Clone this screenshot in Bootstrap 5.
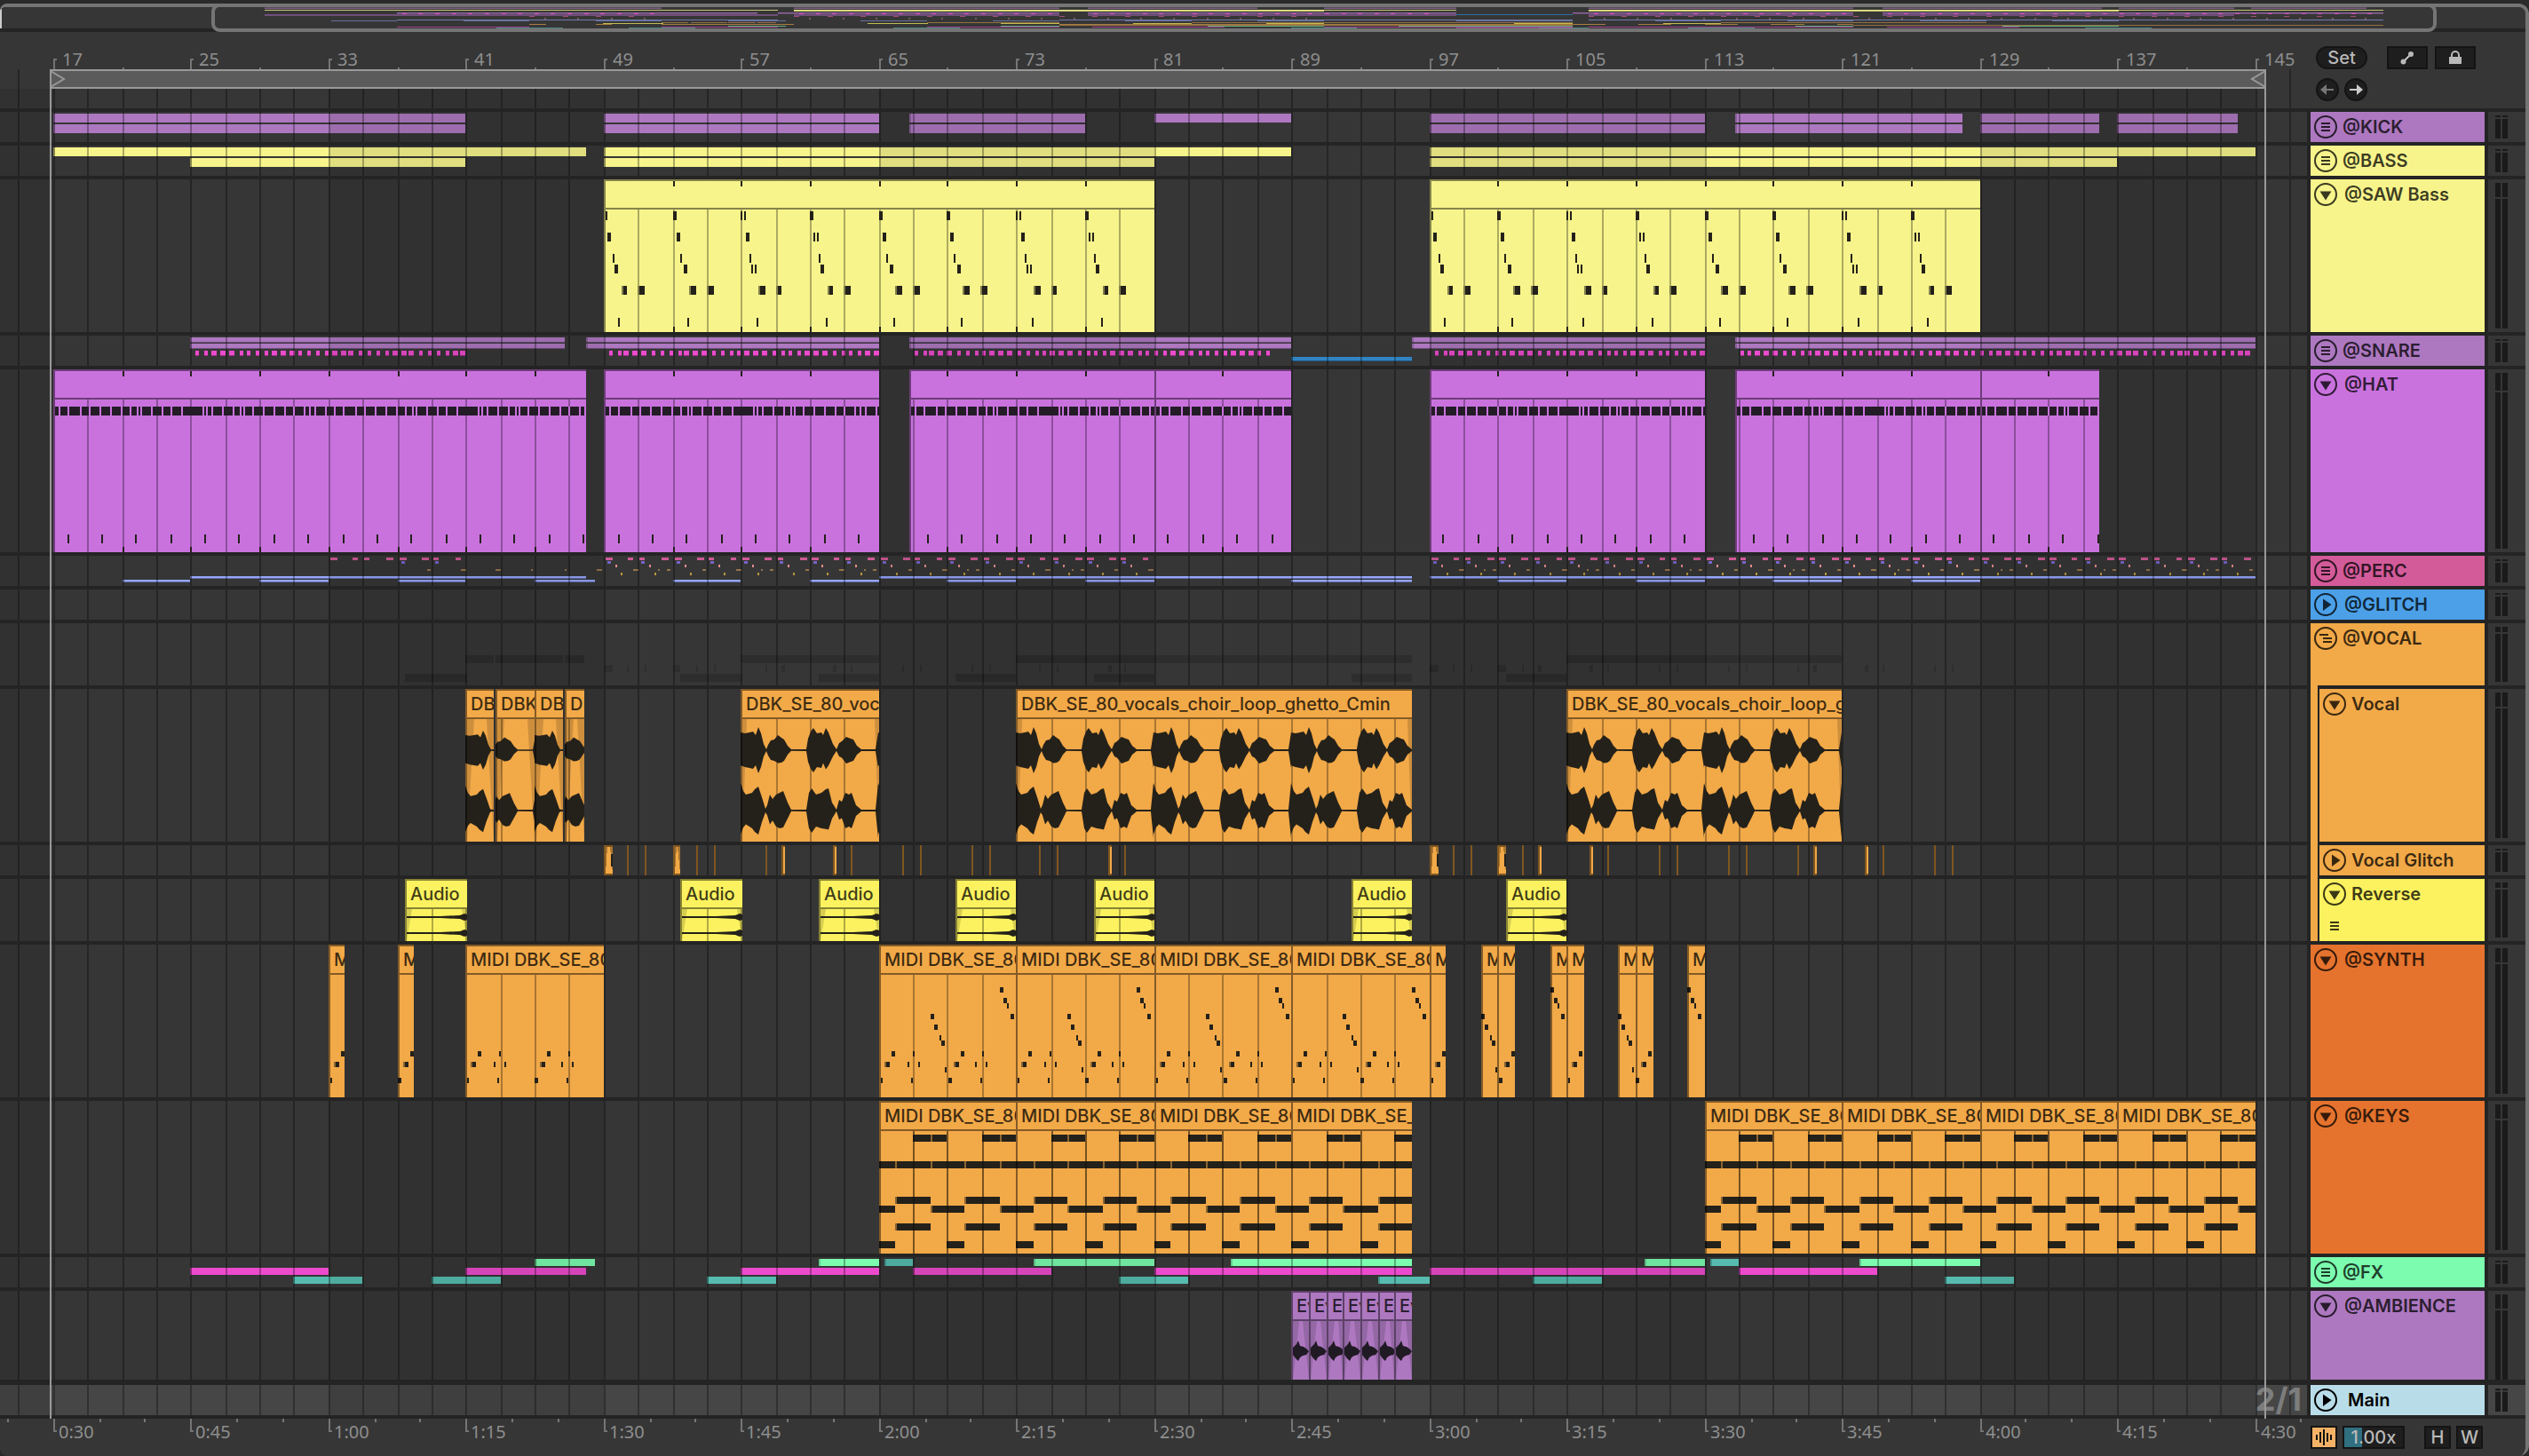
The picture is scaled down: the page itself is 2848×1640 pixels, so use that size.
<!DOCTYPE html>
<html lang="en">
<head>
<meta charset="utf-8">
<meta name="viewport" content="width=device-width, initial-scale=1">
<title>Arrangement</title>
<link rel="stylesheet" href="https://cdn.jsdelivr.net/npm/bootstrap@5.3.0/dist/css/bootstrap.min.css">
<style>
  :root { --panel:#363636; --gap:#242424; --frame:#757575; --rule:#999; }
  body { background:#2a2a2a; font-family:Inter,"Liberation Sans",sans-serif; font-size:20px; line-height:26px; color:#b9b9b9; padding-top:4px; }
  .app-frame { background:var(--gap); border:4px solid var(--frame); border-left:0; border-bottom:0; border-radius:8px 12px 12px 8px; overflow:hidden; min-height:calc(100vh - 4px); }
  .overview { height:28px; border-bottom:4px solid var(--gap); background:var(--panel); }
  .overview svg, .lane svg, .time-ruler svg { display:block; }
  .view-window { top:-4px; height:32px; border:4px solid var(--frame); border-radius:9px; }
  .top-row { height:86px; background:var(--panel); }
  .time-ruler { min-width:0; overflow:hidden; }
  .side-tools { width:246px; flex:none; }
  .set-tools { padding:16px 0 0 10px; }
  .mode-tools { margin-left:22px; }
  .locator-tools { margin-top:10px; gap:6px; }
  .track-list { padding:4px 0; }
  .lane { min-width:0; overflow:hidden; background:var(--panel); }
  .head { width:196px; flex:none; color:rgba(0,0,0,.77); font-size:20px; font-weight:600; }
  .head-body { padding:4px; min-width:0; }
  .head-line { height:26px; gap:6px; white-space:nowrap; }
  .is-track .head-line { gap:8px; }
  .is-main .head-line { gap:12px; color:#000; }
  .nest-strip { width:10px; flex:none; background:#f2a948; border-right:2px solid var(--gap); position:relative; }
  .nest-strip::before { content:""; position:absolute; left:0; width:8px; top:-4px; height:4px; background:#f2a948; }
  .fold { width:26px; height:26px; padding:0; border:0; background:none; color:inherit; display:flex; }
  .lines-mark { margin:18px 0 0 8px; display:block; }
  .meter { width:42px; flex:none; background:var(--panel); padding:4px 0 4px 8px; gap:2px; }
  .is-main .meter { background:#464646; }
  .is-last .meter { padding-bottom:0; }
  .meter-col { width:6px; background:#1a1a1a; }
  .meter-col i { display:block; border-bottom:2px solid var(--panel); box-sizing:content-box; }
  .is-last { margin-bottom:2px; }
  .clip-name { position:absolute; top:2px; height:30px; line-height:31px; padding-left:6px; overflow:hidden; white-space:nowrap; color:rgba(0,0,0,.76); font-size:20px; font-weight:500; }
  .dark-btn { height:26px; border:2px solid #141414; background:#1e1e1e; color:#b9b9b9; padding:0; font-size:20px; line-height:20px; font-weight:500; display:flex; align-items:center; justify-content:center; }
  .w-46 { width:46px; } .w-30 { width:30px; } .w-58 { width:58px; } .w-26 { width:26px; }
  .zoom-box { width:70px; margin:0 22px 0 6px; text-align:center; background:linear-gradient(90deg,#2f6f80 20px,#1e1e1e 20px); border-radius:0; outline:0; }
  .bottom-tools .w-30:last-child { margin-left:6px; }
  .wave-on { background:#f4b266; color:#111; }
  .bottom-row { height:42px; background:var(--panel); }
  .bottom-tools { padding:8px 0 0 4px; }
  .edge-line { position:absolute; top:42px; bottom:42px; width:2px; background:var(--rule); pointer-events:none; }
  .grid-value { right:6px; top:0; font-size:36px; line-height:32px; font-weight:700; color:#7d7d7d; }
  .rule-text { font-family:"Noto Sans",sans-serif; font-size:20px; fill:#8e8e8e; }
</style>
<script src="https://cdn.jsdelivr.net/npm/bootstrap@5.3.0/dist/js/bootstrap.bundle.min.js"></script>
</head>
<body>
<main class="app-frame d-flex flex-column">
  <nav class="overview position-relative flex-shrink-0" id="overview" aria-label="Overview"></nav>
  <div class="position-relative">
    <section class="top-row d-flex">
      <div class="time-ruler flex-fill" id="barRuler"></div>
      <div class="side-tools set-tools">
        <div class="d-flex">
          <button class="dark-btn w-58 rounded-pill" type="button">Set</button>
          <div class="d-flex gap-2 mode-tools">
            <button class="dark-btn w-46" type="button" aria-label="Automation mode"><svg width="16" height="16" viewBox="0 0 16 16" fill="currentColor"><circle cx="3.5" cy="12.5" r="3"/><circle cx="12" cy="4" r="3"/><path d="M3 12 12 3l1 1-9 9z" stroke="currentColor"/></svg></button>
            <button class="dark-btn w-46" type="button" aria-label="Lock envelopes"><svg width="16" height="16" viewBox="0 0 16 16"><path fill="currentColor" d="M1 7h14v8H1z"/><path d="M4 7V5a4 4 0 0 1 8 0v2" fill="none" stroke="currentColor" stroke-width="2"/></svg></button>
          </div>
        </div>
        <div class="d-flex locator-tools">
          <button class="dark-btn w-26 rounded-circle" type="button" aria-label="Previous locator"><svg width="16" height="14" viewBox="0 0 16 14" fill="#777"><path d="M0 7 7 1v5h8v2H7v5z"/></svg></button>
          <button class="dark-btn w-26 rounded-circle" type="button" aria-label="Next locator"><svg width="16" height="14" viewBox="0 0 16 14" fill="#ccc"><path d="M16 7 9 1v5H1v2h8v5z"/></svg></button>
        </div>
      </div>
    </section>
    <section class="track-list d-flex flex-column gap-1" id="tracks"></section>
    <section class="bottom-row d-flex">
      <div class="time-ruler flex-fill" id="secRuler"></div>
      <div class="side-tools bottom-tools d-flex">
        <button class="dark-btn w-30 wave-on" type="button" aria-label="Waveform zoom"><svg width="20" height="20" viewBox="0 0 20 20" stroke="#111" stroke-width="2"><path d="M2 7v6M6 4v12M10 1v18M14 5v10M18 7v6"/></svg></button>
        <input class="dark-btn zoom-box" value="1.00x" aria-label="Waveform zoom factor">
        <button class="dark-btn w-30" type="button">H</button>
        <button class="dark-btn w-30" type="button">W</button>
      </div>
    </section>
    <div class="edge-line" id="edgeStart"></div>
    <div class="edge-line" id="edgeEnd"></div>
  </div>
</main>
<script>
const PUR='#ad78c0', YEL='#f7f48b', MAG='#c972de', PINK='#ec4bcd', ORA='#f2a948', LEM='#fcf25f',
      GRN='#7cfcaf', TEA='#56bcaf', BLU='#96a7fb', INK='#24211a';
const glitch=(()=>{const a=[0,26,46,78,104,124,182,200,258,278,336,356,414,434,490,510,568,586],
      b=[0,26,46,76,104,122,180,200,258,278,336,356,414,432,490,510,568,588];
  const wide1={0:10,78:8,200:4,258:4,568:4}, wide2={0:10,76:10,122:4,180:4,432:4,490:4};
  return [...a.map(p=>[49+p/19.375+.01,wide1[p]||2]),...b.map(p=>[97+p/19.375+.01,wide2[p]||2])];})();
const vocal=[[41,42.6],[42.75,44.95],[45,46.65],[46.75,47.9],[57,65],[73,96],[105,121]];
const audio=[[37.45,41.1],[53.45,57.1],[61.5,65],[69.45,73],[77.5,81],[92.5,96],[101.5,105]];
const synth=[[33,34],[37,38],[41,49],[65,73],[73,81],[81,89],[89,97],[97,98],[100,101],[101,102],[104,105],[105,106],[108,109],[109,110],[112,113]];
const keys=[[65,73],[73,81],[81,89],[89,96],[113,121],[121,129],[129,137],[137,145]];
const kick=[[17,41],[49,65],[66.75,77],[97,113],[114.75,128],[129,136],[137,144]];
const snare=[[25,46.75],[48,65],[66.75,89],[96,113],[114.75,145]];
const tracks=[
 {n:'@KICK',c:PUR,h:34,i:'menu',rows:[[2,10,PUR,[...kick,[81,89]]],[14,10,PUR,kick]]},
 {n:'@BASS',c:YEL,h:34,i:'menu',rows:[[2,10,YEL,[[17,48],[49,89],[97,145]]],[14,10,YEL,[[25,41],[49,81],[97,137]]]]},
 {n:'@SAW Bass',c:YEL,h:172,i:'down',clips:[[49,81],[97,129]],draw:'saw'},
 {n:'@SNARE',c:PUR,h:34,i:'menu',rows:[[2,6,PUR,snare],[9,6,PUR,snare],[24,5,'#3184c4',[[89,96]]]],dashes:[[25,41],[49,65],[66.75,88],[97,113],[114.75,145]]},
 {n:'@HAT',c:MAG,h:206,i:'down',clips:[[17,48],[49,65],[66.75,81],[81,89],[97,113],[114.75,129],[129,136]],draw:'hat'},
 {n:'@PERC',c:'#d35b9a',h:34,i:'menu',rows:[[23,3,BLU,[[25,48],[65,96],[97,145]]],[27,3,BLU,[[21,25],[29,33],[37,41],[45,48.5],[53,57],[61,65],[69,73],[77,81],[89,96],[101,105],[109,113],[117,121],[125,129]]]],perc:[[33,41,1],[49,81],[97,145]]},
 {n:'@GLITCH',c:'#4ba0e8',h:34,i:'play'},
 {n:'@VOCAL',c:ORA,h:70,i:'nest',ghost:1},
 {n:'Vocal',c:ORA,h:172,i:'down',nest:1,clips:vocal,draw:'vocal',title:'DBK_SE_80_vocals_choir_loop_ghetto_Cmin'},
 {n:'Vocal Glitch',c:ORA,h:34,i:'play',nest:1,slices:1},
 {n:'Reverse',c:LEM,h:70,i:'down',nest:1,clips:audio,draw:'rev',title:'Audio',more:1},
 {n:'@SYNTH',c:'#e5732e',h:172,i:'down',cc:ORA,clips:synth,draw:'synth',title:'MIDI DBK_SE_80'},
 {n:'@KEYS',c:'#e5732e',h:172,i:'down',cc:ORA,clips:keys,draw:'keys',title:'MIDI DBK_SE_80'},
 {n:'@FX',c:GRN,h:34,i:'menu',rows:[
   [2,8,GRN,[[45,48.5],[61.5,65],[74,81],[85.5,96],[109.5,113],[122,129]]],[2,8,TEA,[[65.3,67],[113.3,115]]],
   [12,8,PINK,[[25,33],[41,48],[57,65],[67,75],[81,96],[97,113],[115,123]]],
   [22,8,TEA,[[31,35],[39,43],[55,59],[79,83],[94,97],[103,107],[127,131]]]]},
 {n:'@AMBIENCE',c:PUR,h:100,i:'down',clips:[[89,90],[90,91],[91,92],[92,93],[93,94],[94,95],[95,96]],draw:'amb',title:'Ev',last:1},
 {n:'Main',c:'#b8dde9',h:34,i:'play',main:1}];

const icons={
 menu:'<path d="M8 9h10M8 13h10M8 17h10" stroke="currentColor" stroke-width="2"/>',
 nest:'<path d="M6 9h10M10 13h10M10 17h10" stroke="currentColor" stroke-width="2"/>',
 down:'<path d="M6.500 9.500h13L13 19.500z" fill="currentColor"/>',
 play:'<path d="M10 6.500v13.500l9.500-7z" fill="currentColor"/>'};
const bars3='<svg class="lines-mark" width="10" height="10" viewBox="0 0 10 10"><path d="M0 1h10M0 5h10M0 9h10" stroke="currentColor" stroke-width="2"/></svg>';

const host=document.getElementById('tracks');
host.innerHTML=tracks.map((t,i)=>{
  const peak=t.h<=34?2:t.h<=70?6:t.h<=172?16:20;
  const col=`<span class="meter-col"><i style="height:${peak}px"></i></span>`;
  return `<div class="d-flex gap-1 ${t.main?'is-main':t.nest?'':/menu|nest/.test(t.i)?'':'is-track'} ${t.last?'is-last':''}" style="height:${t.h}px">
   <div class="lane flex-fill position-relative" data-i="${i}"></div>
   <div class="head d-flex">${t.nest?'<span class="nest-strip"></span>':''}
    <div class="head-body flex-fill" style="background:${t.c}"><div class="head-line d-flex">
     <button class="fold" type="button" aria-label="Fold ${t.n}"><svg width="26" height="26" viewBox="0 0 26 26"><circle cx="13" cy="13" r="12" fill="none" stroke="currentColor" stroke-width="2"/>${icons[t.i]}</svg></button>
     <span>${t.n}</span></div>${t.more?bars3:''}</div></div>
   <div class="meter d-flex">${col}${col}</div></div>`;}).join('');

let W,K,O;
const X=b=>2*Math.floor((O+(b-17)*K)/2);
const R=(x,y,w,h,f,o)=>w>0?`<rect x="${x}" y="${y}" width="${w}" height="${h}" fill="${f}"${o?` fill-opacity="${o}"`:''}/>`:'';
function measure(){ W=document.querySelector('.lane').clientWidth; K=W*19.372/2598; O=W*60.65/2598; }
function bands(h){ let s=''; for(let b=1;b<W/K+17;b+=32) s+=R(X(b),0,X(b+16)-X(b),h,'#000',.09); return s; }
function grid(h,y=0){ let s=''; for(let b=15;X(b)<W;b+=2) s+=R(X(b),y,2,h,'#000',.3); return s; }
const pen=document.createElement('canvas').getContext('2d');
/* keeps the characters that start inside the clip */
function fit(text,w){ pen.font='500 20px Inter, "Liberation Sans", sans-serif'; let n=1; while(n<text.length&&pen.measureText(text.slice(0,n)).width<w-6) n++; return text.slice(0,n); }

const waveA=[[0,20],[5,19],[10,20],[14,21],[17,17],[20,26],[23,19],[26,7],[29,1],[31,6],[34,11],[38,12],[42,17],[46,14],[49,12],[53,5],[57,1],[74,1],[76,13],[79,21],[82,25],[86,19],[91,20],[93,17],[96,25],[99,20],[104,7],[108,1],[111,8],[114,10],[119,15],[124,13],[127,12],[131,5],[136,1],[152,1],[155,20]];
const waveB=[[0,31],[3,22],[6,18],[13,20],[16,24],[20,27],[24,15],[28,2],[30,6],[33,18],[36,13],[40,18],[44,20],[48,22],[53,9],[57,1],[74,1],[77,20],[80,25],[85,18],[91,20],[96,24],[99,25],[103,9],[108,1],[111,12],[114,10],[118,20],[122,18],[125,20],[130,6],[136,1],[152,1],[155,31]];
function wave(pts,c,w,from,rep,amp=1){ const k=K/19.375, up=[],dn=[];
  for(let o=0;o<w+155;o+=155*k){ for(const [x,a] of pts){ if(!rep&&from==0&&x>29&&x<74){up.push((x*k)+' '+(c-1));dn.push((x*k)+' '+(c+1));continue;} const px=(x-from)*k+o; up.push(px+' '+(c-a*amp)); dn.push(px+' '+(c+a*amp*(x%3?1:.86))); } if(!rep)break; }
  return `<path d="M${up.join('L')}L${dn.reverse().join('L')}z" fill="${INK}"/>`; }
function fades(w,y,h,a){ return `<path d="M2 ${y}h${a}L2 ${y+h}zM${w} ${y}h-${a}L${w} ${y+h}z" fill="#000" fill-opacity=".15"/>`; }

const saw=[
 [[0,2,2],[1,4,4],[2,10,2],[3,12,4],[4,20,6],[4,38,8],[5,16,2]],
 [[0,0,4],[1,4,4],[2,8,2],[3,12,4],[4,18,8],[4,38,8],[5,16,2]],
 [[0,0,2],[0,4,2],[1,6,4],[2,10,2],[3,12,2],[3,16,2],[4,20,8],[4,40,6],[5,18,2]],
 [[0,0,4],[1,4,2],[1,8,2],[2,10,2],[3,12,4],[4,20,6],[4,38,8],[5,18,2]]];
const sawY=[36,60,84,96,120,156];
const hatGaps=[6,16,30,40,52,64,76,86,94,98,110,122,132,144,169,173,179,191,203,211,215,225,237,249,261,271,283,289,295,307];
const syn=[[48,136,4],[60,140,4],[66,144,2],[78,148,4],[78,58,4],[90,62,4],[102,68,2],[108,70,4],[138,74,2],
 [120,14,4],[120,38,2],[120,92,4],[120,116,2],[132,6,6],[132,32,2],[132,44,2],[132,84,6],[132,108,2],[132,120,2],[150,2,2],[150,36,2],[150,78,4],[150,114,2]];
const keyRows=[[38,[[2,3],[3,4]]],[68,[[0,1],[1,2],[2,3],[3,4]]],[108,[[1,3]]],[118,[[0,1],[3,4]]],[138,[[1,3]]],[158,[[0,1]]]];
const draws={
 saw(s,e,h,x0){ let o=''; for(let b=s,i=0;b<e;b+=4,i++){ const v=i>3&&i%4==0?1:i%4; for(const [r,x,w] of saw[v]){ const px=X(b)-x0+x*K/19.375; o+=R(px,sawY[r],w,10,INK); if(r==4)o+=R(px,sawY[r],2,10,YEL,.45);} if(i)o+=R(X(b)-x0,2,2,6,INK)+R(X(b)-x0,h-6,2,6,INK);} return o; },
 hat(s,e,h,x0,w){ const k=K/19.375; let o=R(2,42,w-2,10,'#231c26'); for(let p=0;p<w;p+=310*k) for(const g of hatGaps) o+=R(2*Math.round((p+g*k)/2),42,2,10,MAG);
   for(let b=Math.ceil((s-1)/2)*2+1;b<e;b+=2){ o+=R(X(b+.8)-x0,186,2,10,INK); if((b-17)%4==0&&b>s)o+=R(X(b)-x0,2,2,6,INK)+R(X(b)-x0,h-6,2,6,INK);} return o; },
 vocal(s,e,h,x0,w){ const small=s<48, f=s==42.75||s==46.75?32:0;
   return fades(w,34,h-34,small?8:5)+wave(waveA,69,w,f,!small,small?.85:1)+wave(waveB,137,w,f,!small,small?.9:1); },
 rev(s,e,h,x0,w){ let o=fades(w,34,36,6); for(const c of [43,61]) o+=`<path d="M2 ${c-1}H${w-30}L${w-8} ${c-2}L${w-3} ${c-4}L${w} ${c-3}V${c+3}L${w-3} ${c+4}L${w-8} ${c+2}L${w-30} ${c+1}H2z" fill="${INK}"/>`; return o; },
 synth(s,e,h,x0){ let o=''; const k=K/19.375; for(let b=17+8*Math.floor((s-17)/8);b<e;b+=8) for(const [y,x,w] of syn){ if(s<49&&(y<120||y==138))continue; const px=X(b)-x0+x*k; o+=R(px,y,w,6,INK); if(w==6)o+=R(px,y,2,6,ORA,.5);} return o; },
 keys(s,e,h,x0){ let o=''; for(let b=s;b<e;b+=4) for(const [y,n] of keyRows) for(const [p,q] of n){ const a=X(b+p)-x0, z=X(b+q)-x0; o+=R(a,y,z-a,8,INK)+(p%2?R(a,y,2,8,ORA,.5):'');} return o; },
 amb(s,e,h,x0,w){ return `<path d="M2 34H9L2 ${h}zM${w} 34H13L${w} ${h}zM2 34H6L2 ${h}zM${w} 34H16L${w} ${h}z" fill="#000" fill-opacity=".14"/><path d="M2 64 4 62 6 60 8 56 10 62 14 63 17 65 20 68 17 72 13 73 10 75 8 79 5 76 2 72z" fill="#201a24"/>`; }};

function lane(el){
  const t=tracks[el.dataset.i], h=t.h; let s=R(0,0,W,h,t.main?'#464646':'#363636'), names='';
  for(const [y,rh,c,list] of t.rows||[]) for(const [a,b] of list){ s+=R(X(a),y,X(b)-X(a),rh,c); s+= rh<7?R(X(a),y+rh-1,X(b)-X(a),1,'#000',.35):''; s+=R(X(a),y,2,rh,'#000',.2); }
  for(const [a,b] of t.dashes||[]) for(let d=0;;d++){ const big=[2,3,4].includes(d%7), x=X(a+d*.5)+(big?4:6), w=big?6:4; if(x+w>X(b))break; s+=R(x,17,w,6,PINK)+R(x,22,w,1,'#000',.35); }
  for(const [a,b,few] of t.perc||[]) for(let q=a,i=0;q<b;q+=2,i++){ const x=X(q), k=K/19.375;
    s+=R(x+2,2,i%2?6:8,3,'#cf5a96')+R(x+27*k,2,i%3?8:6,3,'#cf5a96');
    if(!few||i>1) s+=R(x+4,6,4,3,'#7565c8')+R(x+33*k,15,i%3?4:6,2,'#97744b');
    if(!few) s+=R(x+13*k,10,2,3,'#e58c8c')+R(x+19*k,19,2,3,'#b8963e')+(i%3==1?R(x+23*k,15,2,2,'#97744b'):''); }
  if(t.perc) for(const b of [42.75,44.75,46.8,48.6]) s+=R(X(b),15,b==42.75||b==48.6?6:2,2,'#97744b');
  if(t.ghost){ for(const [a,b] of vocal) s+=R(X(a),36,X(b)-X(a),9,'#000',.16); for(const [a,w] of glitch) s+=R(X(a),47,w,8,'#000',.14); for(const [a,b] of audio) s+=R(X(a),57,X(b)-X(a),9,'#000',.16); }
  s+=bands(h)+grid(h);
  if(t.slices) for(const [a,w] of glitch){ s+=R(X(a),0,w,34,'#80561f'); if(w>2) s+=R(X(a)+2,2,w-2,30,ORA); if(w>6) s+=`<path d="M${X(a)+2} 2h2l-2 30zM${X(a)+w} 2h-3l3 30z" fill="#a87630"/>`+(w>8?R(X(a)+w-2,10,2,14,INK):''); }
  for(const [a,b] of t.clips||[]){ const x=X(a), w=X(b)-x, c=t.cc||t.c, notes=draws[t.draw](a,b,h,x,w); let g='';
    for(let q=Math.floor(a/2)*2+1;q<b;q+=2) if(q>a) g+=R(X(q)-x,34,2,h-34,'#000',.3);
    s+=`<svg x="${x}" y="0" width="${w}" height="${h}">`+R(0,0,w,h,c)+g+notes+(t.draw=='keys'?g:'')+R(0,0,w,2,'#000',.46)+R(0,2,2,h,'#000',.46)+R(2,32,w,2,'#000',.46)+'</svg>';
    if(t.title) names+=`<div class="clip-name" style="left:${x}px;width:${w}px">${fit(t.title,w)}</div>`; }
  el.innerHTML=`<svg width="${W}" height="${h}" shape-rendering="${/vocal|rev|amb/.test(t.draw)?'auto':'crispEdges'}">${s}</svg>${names}${t.main?'<span class="grid-value position-absolute">2/1</span>':''}`;
}
function rulers(){
  let s=`<svg width="${W}" height="86">`; const x0=X(17)-4, x1=X(145)+12;
  s+=`<g transform="translate(0 64)">${bands(22)}</g><g shape-rendering="crispEdges">${grid(44,42)}</g>`;
  for(let b=17;b<=145;b+=4){ const x=X(b), big=(b-17)%8==0; s+=big?R(x,30,2,12,'#757575')+R(x,30,4,2,'#757575')+`<text class="rule-text" x="${x+10}" y="38">${b}</text>`:R(x,40,2,2,'#757575'); }
  s+=R(x0,42,x1-x0,22,'#5b5b5b')+R(x0,42,x1-x0,2,'#999')+R(x0,62,x1-x0,2,'#999');
  s+=`<path d="M${x0+1} 44l15 9-15 9M${x1-1} 44l-15 9 15 9" fill="none" stroke="#999" stroke-width="2"/></svg>`;
  barRuler.innerHTML=s;
  edgeStart.style.left=x0+'px'; edgeEnd.style.left=(x1-2)+'px';
  s=`<svg width="${W}" height="42">`;
  for(let i=-1;i<50;i++){ const x=X(17+i*8/3+.001), sec=30+i*5; s+= i%3==0?R(x,0,2,15,'#757575')+R(x,13,4,2,'#757575')+`<text class="rule-text" x="${x+6}" y="22">${Math.floor(sec/60)}:${String(sec%60).padStart(2,'0')}</text>`:R(x,0,2,4,'#757575'); }
  secRuler.innerHTML=s+'</svg>';
}
function over(){
  const w=overview.clientWidth, f=w/2844, P=b=>(298+(b-17)*18.64)*f; let s='';
  const bar=(list,y,h,c,o)=>{ for(const [a,b] of list) s+=R(P(a),y,P(b)-P(a),h,c,o); };
  bar([...kick,[81,89]],0,1,PUR,.3); bar([...kick,[81,89]],1,1,PUR,.6); bar([[17,48],[49,89],[97,145]],3,1,YEL,.75); bar([[49,81],[97,129]],3,2,YEL,.75);
  bar(snare,6,1,PUR,.75); bar([[17,48],[49,65],[66.75,89],[97,113],[114.75,136]],8,2,MAG,.4); bar(snare,7,1,MAG,.35);
  for(const [a,b] of tracks[3].dashes) for(let q=a+.3;q<b;q+=1) s+=R(P(q),7,5,1,PINK,.8);
  for(const [a,b] of tracks[5].perc) for(let q=a;q<b;q+=2) s+=R(P(q),10,6,1,'#cf5a96',.7)+R(P(q+.9),12,2,2,'#e58c8c',.4);
  bar(tracks[5].rows[0][3],14,1,BLU,.6); bar(tracks[5].rows[1][3],15,1,BLU,.5); bar([[89,96]],8,1,'#2b78b5',.9);
  bar(vocal,17,1,ORA,.5); bar(audio,18,1,LEM,.7); bar(synth,19,1,ORA,.6); bar(keys,20,1,ORA,.5);
  bar(tracks[13].rows[0][3],21,1,GRN,.6); bar(tracks[13].rows[2][3],22,1,PINK,.6); bar(tracks[13].rows[3][3],23,1,TEA,.6); bar([[89,96]],23,1,PUR,.6);
  s+=R(0,0,2,24,'#ccc');
  const a=238*f, b=2744*f;
  overview.innerHTML=`<svg width="${w}" height="24" shape-rendering="crispEdges">${s}</svg><div class="view-window position-absolute" style="left:${a}px;width:${b-a}px"></div>`;
}
const overview=document.getElementById('overview'), barRuler=document.getElementById('barRuler'), secRuler=document.getElementById('secRuler'),
      edgeStart=document.getElementById('edgeStart'), edgeEnd=document.getElementById('edgeEnd');
function render(){ measure(); document.querySelectorAll('.lane').forEach(lane); rulers(); over(); }
render(); addEventListener('resize',render);
</script>
</body>
</html>
